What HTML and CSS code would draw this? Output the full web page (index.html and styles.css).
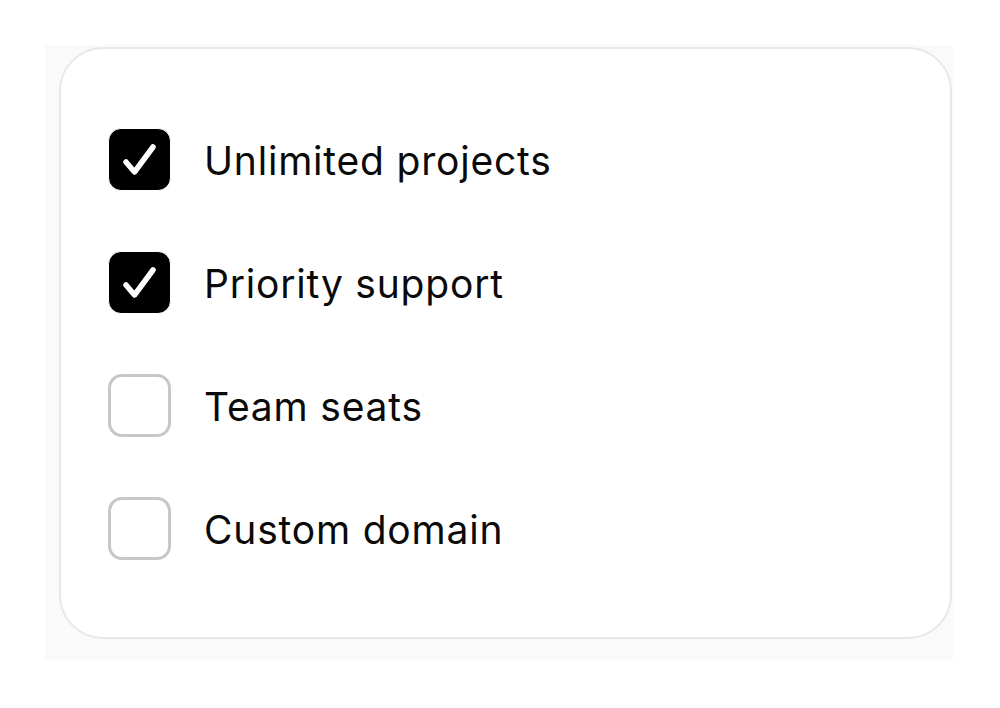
FILE: index.html
```html
<!DOCTYPE html>
<html lang="en">
<head>
  <meta charset="UTF-8" />
  <title>Plan features</title>
  <link rel="stylesheet" href="styles.css">
</head>
<body>
  <div class="frame">
    <div class="card">
      <ul class="features">
        <li class="feature">
          <span class="box checked">
            <svg viewBox="0 0 61 61" width="61" height="61"><path d="M17 33 L25.5 43 L44 18" /></svg>
          </span>
          <span class="label">Unlimited projects</span>
        </li>
        <li class="feature">
          <span class="box checked">
            <svg viewBox="0 0 61 61" width="61" height="61"><path d="M17 33 L25.5 43 L44 18" /></svg>
          </span>
          <span class="label">Priority support</span>
        </li>
        <li class="feature">
          <span class="box"></span>
          <span class="label">Team seats</span>
        </li>
        <li class="feature">
          <span class="box"></span>
          <span class="label">Custom domain</span>
        </li>
      </ul>
    </div>
  </div>
</body>
</html>
```

FILE: styles.css
```css
body {
  margin: 0;
  background: #fff;
  font-family: Inter, 'Liberation Sans', sans-serif;
  color: #0a0a0a;
}

.frame {
  margin: 45px 0 0 45px;
  width: 908px;
  height: 615px;
  padding: 2px 0 0 14px;
  box-sizing: border-box;
  background: #fafafa;
}

.card {
  width: 893px;
  height: 592px;
  box-sizing: border-box;
  border: 2px solid #e8e8e8;
  border-radius: 44px;
  background: #fff;
  padding: 79px 0 0 47px;
}

.features {
  list-style: none;
  margin: 0;
  padding: 0;
  display: flex;
  flex-direction: column;
  gap: 60px;
}

.feature {
  display: flex;
  align-items: center;
  gap: 33px;
  height: 63px;
}

.box {
  width: 63px;
  height: 63px;
  box-sizing: border-box;
  border: 3px solid #c7c7c7;
  border-radius: 14px;
  display: flex;
  align-items: center;
  justify-content: center;
  flex-shrink: 0;
}

.box.checked {
  border: 1px solid #fff;
  background: #000;
  border-radius: 13px;
}

.box svg path {
  fill: none;
  stroke: #fff;
  stroke-width: 5.5;
  stroke-linecap: round;
  stroke-linejoin: round;
}

.label {
  font-size: 39px;
  letter-spacing: 0.8px;
  line-height: 1;
  padding-top: 2px;
}
```
